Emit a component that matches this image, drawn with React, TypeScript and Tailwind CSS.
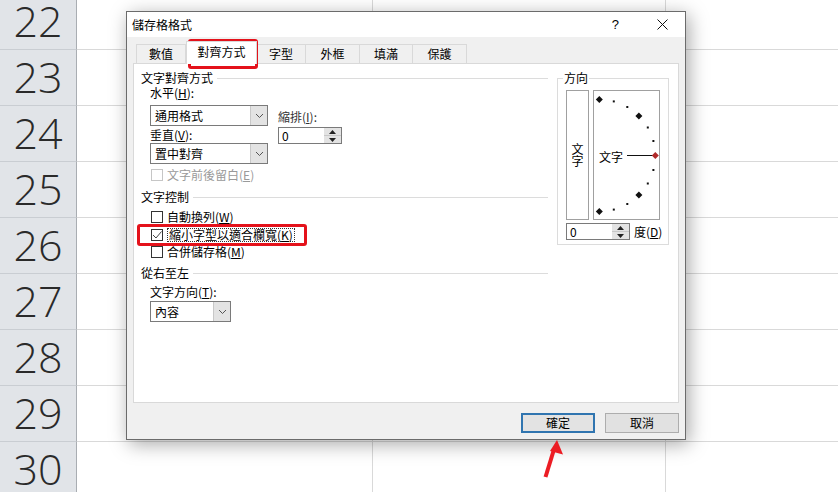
import React from "react";

const cjk = "font-['Noto_Sans_CJK_TC','Noto_Sans',sans-serif]";

const rows = [22, 23, 24, 25, 26, 27, 28, 29, 30];

const tabs = [
  { label: "數值", w: "w-[50px] border-l" },
  { label: "對齊方式", w: "w-[71px]", active: true },
  { label: "字型", w: "w-[49px]" },
  { label: "外框", w: "w-[54px]" },
  { label: "填滿", w: "w-[53px]" },
  { label: "保護", w: "w-[54px]" },
];

function Label({ children, className = "" }: { children: React.ReactNode; className?: string }) {
  return <div className={`flex h-[14px] items-center whitespace-nowrap leading-[14px] ${className}`}>{children}</div>;
}

function GroupLabel({ text, className = "" }: { text: string; className?: string }) {
  return (
    <div className={`flex h-[14px] items-center ${className}`}>
      <span className="whitespace-nowrap leading-[14px]">{text}</span>
      <span className="ml-[4px] h-px flex-1 bg-[#dcdcdc]" />
    </div>
  );
}

function Chevron() {
  return (
    <svg width="9" height="6" viewBox="0 0 9 6">
      <polyline points="1,1 4.5,4.5 8,1" fill="none" stroke="#555" strokeWidth="1" />
    </svg>
  );
}

function Select({ value, w, className = "" }: { value: string; w: string; className?: string }) {
  return (
    <div className={`flex h-[21px] border border-[#7a7a7a] bg-white ${w} ${className}`}>
      <div className="flex flex-1 items-center pl-[4px] leading-[14px]">{value}</div>
      <div className="flex w-[17px] items-center justify-center border-l border-[#c8c8c8] bg-[#e3e3e3]">
        <Chevron />
      </div>
    </div>
  );
}

function Spin({ className = "" }: { className?: string }) {
  return (
    <div className={`flex h-[17px] w-[64px] border border-[#7a7a7a] bg-white ${className}`}>
      <div className="flex flex-1 items-center pl-[3px] leading-[14px]">0</div>
      <div className="flex w-[17px] flex-col bg-[#e3e3e3]">
        <div className="flex flex-1 items-center justify-center border-b border-[#c8c8c8]">
          <svg width="7" height="4" viewBox="0 0 7 4">
            <polygon points="0,4 3.5,0 7,4" fill="#222" />
          </svg>
        </div>
        <div className="flex flex-1 items-center justify-center">
          <svg width="7" height="4" viewBox="0 0 7 4">
            <polygon points="0,0 3.5,4 7,0" fill="#222" />
          </svg>
        </div>
      </div>
    </div>
  );
}

function Check({ checked, disabled }: { checked?: boolean; disabled?: boolean }) {
  return (
    <span
      className={`flex h-[12px] w-[12px] shrink-0 items-center justify-center border bg-white ${
        disabled ? "border-[#c6c6c6]" : "border-[#333333]"
      }`}
    >
      {checked && (
        <svg width="10" height="10" viewBox="0 0 10 10">
          <polyline points="1,5 4,8 9.5,1.5" fill="none" stroke="#444" strokeWidth="1" />
        </svg>
      )}
    </span>
  );
}

function Dial() {
  const cx = 5.3;
  const cy = 64.5;
  const r = 56;
  const marks = [] as React.ReactNode[];
  for (let a = 90; a >= -90; a -= 15) {
    const rad = (a * Math.PI) / 180;
    const x = cx + r * Math.cos(rad);
    const y = cy - r * Math.sin(rad);
    if (a === 0) {
      marks.push(
        <polygon key={a} points={`${x - 3.5},${y} ${x},${y - 3.5} ${x + 3.5},${y} ${x},${y + 3.5}`} fill="#b02a2a" />
      );
    } else if (a % 45 === 0) {
      marks.push(
        <polygon key={a} points={`${x - 3.5},${y} ${x},${y - 3.5} ${x + 3.5},${y} ${x},${y + 3.5}`} fill="#111" />
      );
    } else {
      marks.push(<rect key={a} x={x - 1} y={y - 1} width="2" height="2" fill="#111" />);
    }
  }
  return (
    <div className="relative h-[130px] w-[67px] border border-[#a0a0a0] bg-white">
      <svg className="absolute inset-0" width="65" height="128" viewBox="0 0 65 128">
        <line x1="33" y1="64.5" x2="59" y2="64.5" stroke="#111" strokeWidth="1" />
        {marks}
      </svg>
      <span className="absolute left-[5px] top-[59px] leading-[14px]">文字</span>
    </div>
  );
}

export default function App() {
  return (
    <div className="relative h-[492px] w-[838px] overflow-hidden bg-white">
      {/* worksheet */}
      <div className="-mt-[6px] flex flex-col">
        {rows.map((n) => (
          <div key={n} className="flex h-[56px]">
            <div className="flex w-[77px] items-center justify-center border-b border-r border-b-[#c9cdd2] border-r-[#a9adb2] bg-[#e1e4e8] pb-[2px] font-['Open_Sans',sans-serif] text-[43px] font-light leading-none text-[#2a2a2a]">
              {n}
            </div>
            <div className="w-[296px] border-b border-r border-[#d9d9d9]" />
            <div className="w-[293px] border-b border-r border-[#d9d9d9]" />
            <div className="flex-1 border-b border-[#d9d9d9]" />
          </div>
        ))}
      </div>

      {/* dialog */}
      <div
        className={`absolute left-[126px] top-[11px] flex h-[429px] w-[560px] flex-col border border-[#6b6b6b] bg-[#f0f0f0] text-[12px] text-black shadow-[3px_4px_18px_rgba(0,0,0,0.35)] ${cjk}`}
      >
        <div className="flex h-[25px] items-center bg-white pl-[5px] pr-[17px]">
          <span className="leading-[14px]">儲存格格式</span>
          <span className="ml-auto font-['Liberation_Sans',sans-serif] text-[13px] leading-none">?</span>
          <svg className="ml-[38px]" width="11" height="11" viewBox="0 0 11 11">
            <path d="M0.5 0.5 L10.5 10.5 M10.5 0.5 L0.5 10.5" stroke="#111" strokeWidth="1" />
          </svg>
        </div>

        <div className="mt-[4px] flex h-[22px] items-end pl-[9px]">
          {tabs.map((t) =>
            t.active ? (
              <div
                key={t.label}
                className={`relative z-10 -mb-px flex h-[23px] items-center justify-center border border-b-0 border-[#d9d9d9] bg-white pb-[2px] ${t.w}`}
              >
                {t.label}
              </div>
            ) : (
              <div
                key={t.label}
                className={`flex h-[19px] items-center justify-center border-r border-t border-[#d9d9d9] ${t.w}`}
              >
                {t.label}
              </div>
            )
          )}
        </div>

        <div className="mx-[6px] flex h-[340px] border border-[#d9d9d9] bg-white">
          <div className="flex w-[414px] flex-col pl-[7px] pt-[7px]">
            <GroupLabel text="文字對齊方式" />
            <div className="mt-[1px] flex pl-[9px]">
              <div className="flex w-[118px] flex-col">
                <Label>
                  水平(<u>H</u>):
                </Label>
                <Select value="通用格式" w="w-[118px]" className="mt-[5px]" />
                <Label className="mt-[2px]">
                  垂直(<u>V</u>):
                </Label>
                <Select value="置中對齊" w="w-[118px]" className="mt-[1px]" />
              </div>
              <div className="ml-[10px] flex flex-col pt-[24px]">
                <Label className="text-[#333]">
                  縮排(<u>I</u>):
                </Label>
                <Spin className="mt-[3px]" />
              </div>
            </div>
            <div className="mt-[4px] flex h-[14px] items-center gap-[4px] pl-[10px] text-[#9a9a9a]">
              <Check disabled />
              <span className="leading-[14px]">
                文字前後留白(<u>E</u>)
              </span>
            </div>

            <GroupLabel text="文字控制" className="mt-[8px]" />
            <div className="mt-[6px] flex h-[14px] items-center gap-[4px] pl-[10px]">
              <Check />
              <span className="leading-[14px]">
                自動換列(<u>W</u>)
              </span>
            </div>
            <div className="mt-[4px] flex h-[14px] items-center gap-[4px] pl-[10px]">
              <Check checked />
              <span className="border border-dotted border-[#333] px-px leading-[12px]">
                縮小字型以適合欄寬(<u>K</u>)
              </span>
            </div>
            <div className="mt-[3px] flex h-[14px] items-center gap-[4px] pl-[10px]">
              <Check />
              <span className="leading-[14px]">
                合併儲存格(<u>M</u>)
              </span>
            </div>

            <GroupLabel text="從右至左" className="mt-[7px]" />
            <Label className="ml-[9px] mt-[5px]">
              文字方向(<u>T</u>):
            </Label>
            <Select value="內容" w="w-[81px]" className="ml-[9px] mt-[2px]" />
          </div>

          <div className="ml-[9px] mt-[14px] w-[112px]">
            <div className="relative flex h-[167px] flex-col border border-[#dcdcdc] pl-[8px] pt-[11px]">
              <span className="absolute -top-[8px] left-[5px] bg-white px-[1px] leading-[14px]">方向</span>
              <div className="flex gap-[4px]">
                <div className="flex h-[130px] w-[23px] flex-col items-center justify-center border border-[#a0a0a0] bg-white leading-[12px]">
                  <span>文</span>
                  <span>字</span>
                </div>
                <Dial />
              </div>
              <div className="mt-[3px] flex items-center">
                <Spin />
                <span className="ml-[4px] leading-[14px]">
                  度(<u>D</u>)
                </span>
              </div>
            </div>
          </div>
        </div>

        <div className="mt-[10px] flex justify-end gap-[10px] pr-[6px]">
          <div className="flex h-[20px] w-[74px] items-center justify-center border-2 border-[#3075b0] bg-[#e3e3e3] leading-[14px]">
            確定
          </div>
          <div className="flex h-[20px] w-[74px] items-center justify-center border border-[#adadad] bg-[#e1e1e1] leading-[14px]">
            取消
          </div>
        </div>
      </div>

      {/* annotations */}
      <div className="absolute left-[188px] top-[39px] h-[30px] w-[70px] rounded-[3px] border-[3px] border-[#e4121b]" />
      <div className="absolute left-[137px] top-[224px] h-[22px] w-[170px] rounded-[3px] border-[3px] border-[#e4121b]" />
      <svg className="absolute left-[538px] top-[436px]" width="28" height="46" viewBox="0 0 28 46">
        <line x1="7.5" y1="41" x2="15.5" y2="15" stroke="#ec1c24" strokeWidth="4" />
        <polygon points="19,4 25,18.5 12,15" fill="#ec1c24" />
      </svg>
    </div>
  );
}
